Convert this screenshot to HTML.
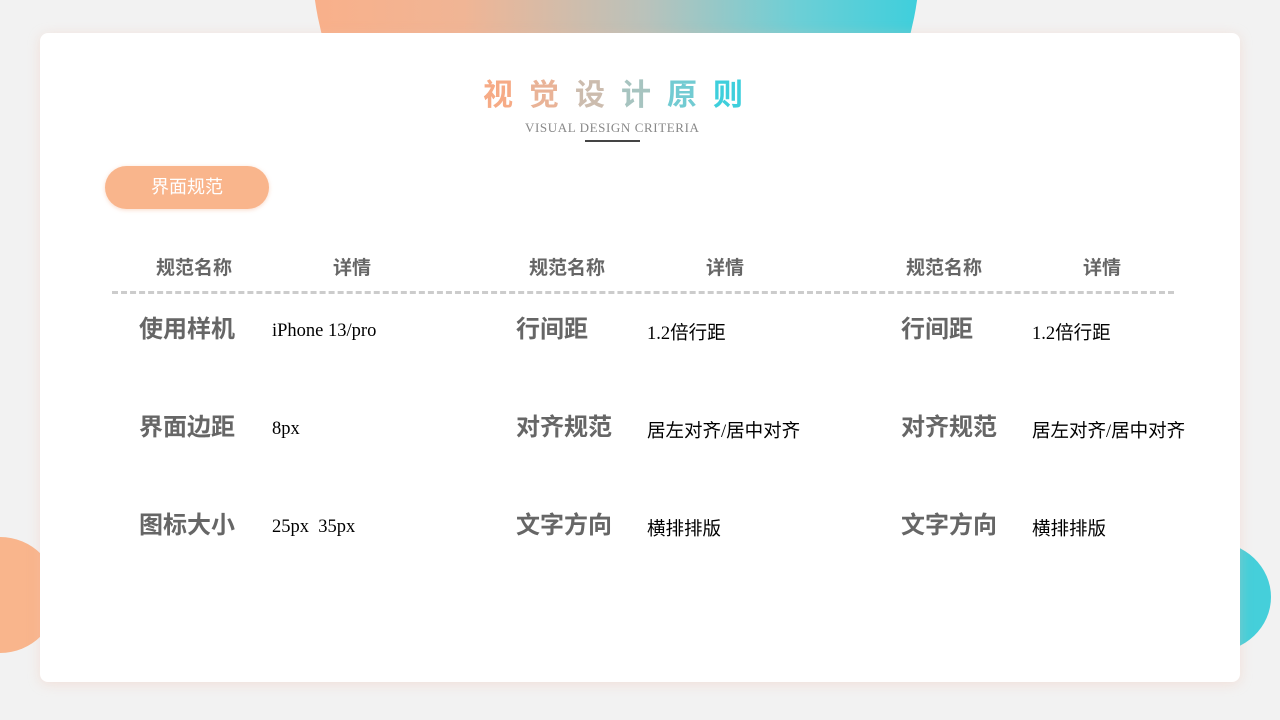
<!DOCTYPE html>
<html><head><meta charset="utf-8"><style>
body{margin:0;width:1280px;height:720px;background:#f2f2f2;position:relative;overflow:hidden;font-family:"Liberation Sans","Noto Sans CJK SC",sans-serif}
.a{position:absolute}
.top{left:312px;top:-346px;width:608px;height:608px;border-radius:50%;background:linear-gradient(90deg,#f9b08a 0%,#f0b595 25%,#b9c2bb 55%,#6ccfd6 80%,#3ecfdc 100%)}
.lc{left:-58px;top:537px;width:116px;height:116px;border-radius:50%;background:#f9b58c}
.rc{left:1155px;top:542px;width:116px;height:110px;border-radius:50%;background:#45cfda}
.card{left:40px;top:33px;width:1200px;height:649px;background:#fff;border-radius:8px;box-shadow:0 2px 12px rgba(240,190,170,.35)}
.title{left:483px;top:70px;font-size:30px;font-weight:bold;letter-spacing:16px;white-space:nowrap}
.title span{display:inline-block}
.sub{left:525px;top:120px;font:13px "Liberation Serif",serif;color:#888;letter-spacing:0.6px;white-space:nowrap}
.bar{left:585px;top:140px;width:55px;height:2px;background:#444}
.pill{left:105px;top:166px;width:164px;height:43px;border-radius:22px;background:#f9b58c;color:#fff;font-size:18px;line-height:43px;text-align:center;box-shadow:0 1px 4px rgba(240,160,120,.4)}
.h{top:253px;font-size:19px;font-weight:bold;color:#666}
.dash{left:112px;top:291px;width:1062px;border-top:3px dashed #ccc}
.l{font-size:24px;font-weight:bold;color:#666}
.v{font-size:18.5px;color:#000;font-family:"Liberation Serif","Noto Sans CJK SC",serif}
</style></head><body>
<div class="a top"></div>
<div class="a lc"></div>
<div class="a rc"></div>
<div class="a card"></div>
<div class="a title"><span style="color:#f6ab86">视</span><span style="color:#e9b397">觉</span><span style="color:#ccbcae">设</span><span style="color:#a7c4c0">计</span><span style="color:#72cbd2">原</span><span style="color:#3ecfdc">则</span></div>
<div class="a sub">VISUAL DESIGN CRITERIA</div>
<div class="a bar"></div>
<div class="a pill">界面规范</div>
<div class="a h" style="left:156px">规范名称</div><div class="a h" style="left:333px">详情</div>
<div class="a h" style="left:529px">规范名称</div><div class="a h" style="left:706px">详情</div>
<div class="a h" style="left:906px">规范名称</div><div class="a h" style="left:1083px">详情</div>
<div class="a dash"></div>
<div class="a l" style="left:139px;top:309px">使用样机</div><div class="a v" style="left:272px;top:321px">iPhone 13/pro</div>
<div class="a l" style="left:516px;top:309px">行间距</div><div class="a v" style="left:647px;top:319px">1.2倍行距</div>
<div class="a l" style="left:901px;top:309px">行间距</div><div class="a v" style="left:1032px;top:319px">1.2倍行距</div>
<div class="a l" style="left:139px;top:407px">界面边距</div><div class="a v" style="left:272px;top:419px">8px</div>
<div class="a l" style="left:516px;top:407px">对齐规范</div><div class="a v" style="left:647px;top:417px">居左对齐/居中对齐</div>
<div class="a l" style="left:901px;top:407px">对齐规范</div><div class="a v" style="left:1032px;top:417px">居左对齐/居中对齐</div>
<div class="a l" style="left:139px;top:505px">图标大小</div><div class="a v" style="left:272px;top:517px">25px&nbsp; 35px</div>
<div class="a l" style="left:516px;top:505px">文字方向</div><div class="a v" style="left:647px;top:515px">横排排版</div>
<div class="a l" style="left:901px;top:505px">文字方向</div><div class="a v" style="left:1032px;top:515px">横排排版</div>
</body></html>
